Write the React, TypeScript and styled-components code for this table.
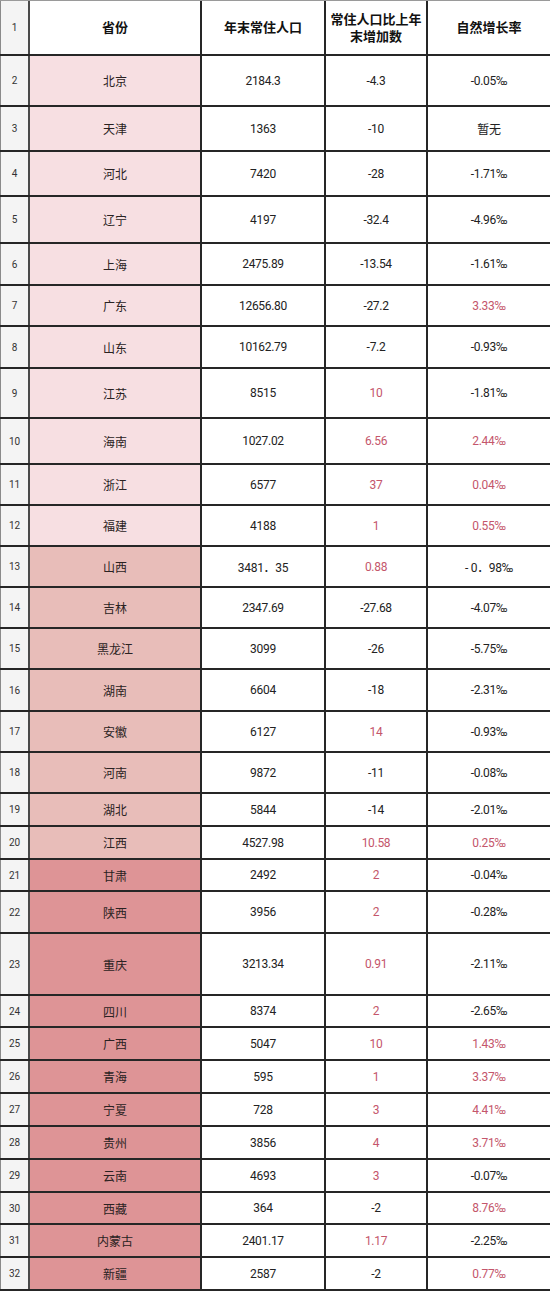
import React from 'react'
import styled, { createGlobalStyle } from 'styled-components'

const GlobalStyle = createGlobalStyle`
  html, body {
    margin: 0;
    padding: 0;
    background: #ffffff;
  }
  body {
    font-family: Roboto, "Noto Sans CJK SC", "Liberation Sans", sans-serif;
    color: #222;
  }
`

type Tier = 1 | 2 | 3

const tierColors: Record<Tier, string> = {
  1: '#f7dfe2',
  2: '#e8bdb9',
  3: '#de9496',
}

const Sheet = styled.div`
  width: 550px;
  border-top: 1px solid #9a9a9a;
  box-sizing: border-box;
`

const Row = styled.div<{ $h: number }>`
  display: grid;
  grid-template-columns: 30px 172px 124px 102px 122px;
  height: ${({ $h }) => $h}px;
  box-sizing: border-box;
  border-bottom: 2px solid #262626;
`

const IndexCell = styled.div`
  display: flex;
  align-items: center;
  justify-content: center;
  background: #f4f4f4;
  border-left: 1px solid #8a8a8a;
  border-right: 2px solid #4a4a4a;
  font-size: 10px;
  color: #333;
`

const Cell = styled.div<{ $red?: boolean }>`
  display: flex;
  align-items: center;
  justify-content: center;
  text-align: center;
  border-right: 2px solid #262626;
  font-size: 12px;
  letter-spacing: -0.3px;
  color: ${({ $red }) => ($red ? '#c4566b' : '#222')};
  &:last-child {
    border-right: none;
  }
`

const Province = styled(Cell)<{ $tier: Tier }>`
  background: ${({ $tier }) => tierColors[$tier]};
  letter-spacing: 0;
  color: #2a2222;
`

const HeadCell = styled(Cell)`
  font-size: 13px;
  font-weight: 700;
  letter-spacing: 0;
  line-height: 17px;
  color: #111;
  padding: 0 4px;
`

type Item = [string, string, string, string, number, boolean, boolean, Tier]

// name, population, change, rate, row height, change red, rate red, colour tier
const rows: Item[] = [
  ['北京', '2184.3', '-4.3', '-0.05‰', 51, false, false, 1],
  ['天津', '1363', '-10', '暂无', 45, false, false, 1],
  ['河北', '7420', '-28', '-1.71‰', 45, false, false, 1],
  ['辽宁', '4197', '-32.4', '-4.96‰', 47, false, false, 1],
  ['上海', '2475.89', '-13.54', '-1.61‰', 42, false, false, 1],
  ['广东', '12656.80', '-27.2', '3.33‰', 41, false, true, 1],
  ['山东', '10162.79', '-7.2', '-0.93‰', 42, false, false, 1],
  ['江苏', '8515', '10', '-1.81‰', 50, true, false, 1],
  ['海南', '1027.02', '6.56', '2.44‰', 46, true, true, 1],
  ['浙江', '6577', '37', '0.04‰', 41, true, true, 1],
  ['福建', '4188', '1', '0.55‰', 41, true, true, 1],
  ['山西', '3481．35', '0.88', '- 0．98‰', 41, true, false, 2],
  ['吉林', '2347.69', '-27.68', '-4.07‰', 41, false, false, 2],
  ['黑龙江', '3099', '-26', '-5.75‰', 41, false, false, 2],
  ['湖南', '6604', '-18', '-2.31‰', 42, false, false, 2],
  ['安徽', '6127', '14', '-0.93‰', 41, true, false, 2],
  ['河南', '9872', '-11', '-0.08‰', 41, false, false, 2],
  ['湖北', '5844', '-14', '-2.01‰', 33, false, false, 2],
  ['江西', '4527.98', '10.58', '0.25‰', 33, true, true, 2],
  ['甘肃', '2492', '2', '-0.04‰', 32, true, false, 3],
  ['陕西', '3956', '2', '-0.28‰', 42, true, false, 3],
  ['重庆', '3213.34', '0.91', '-2.11‰', 62, true, false, 3],
  ['四川', '8374', '2', '-2.65‰', 32, true, false, 3],
  ['广西', '5047', '10', '1.43‰', 33, true, true, 3],
  ['青海', '595', '1', '3.37‰', 33, true, true, 3],
  ['宁夏', '728', '3', '4.41‰', 33, true, true, 3],
  ['贵州', '3856', '4', '3.71‰', 33, true, true, 3],
  ['云南', '4693', '3', '-0.07‰', 33, true, false, 3],
  ['西藏', '364', '-2', '8.76‰', 32, false, true, 3],
  ['内蒙古', '2401.17', '1.17', '-2.25‰', 33, true, false, 3],
  ['新疆', '2587', '-2', '0.77‰', 33, false, true, 3],
]

const App = () => (
  <>
    <GlobalStyle />
    <Sheet>
      <Row $h={55}>
        <IndexCell>1</IndexCell>
        <HeadCell>省份</HeadCell>
        <HeadCell>年末常住人口</HeadCell>
        <HeadCell>常住人口比上年末增加数</HeadCell>
        <HeadCell>自然增长率</HeadCell>
      </Row>
      {rows.map(([name, pop, change, rate, h, changeRed, rateRed, tier], i) => (
        <Row key={name} $h={h}>
          <IndexCell>{i + 2}</IndexCell>
          <Province $tier={tier}>{name}</Province>
          <Cell>{pop}</Cell>
          <Cell $red={changeRed}>{change}</Cell>
          <Cell $red={rateRed}>{rate}</Cell>
        </Row>
      ))}
    </Sheet>
  </>
)

export default App
